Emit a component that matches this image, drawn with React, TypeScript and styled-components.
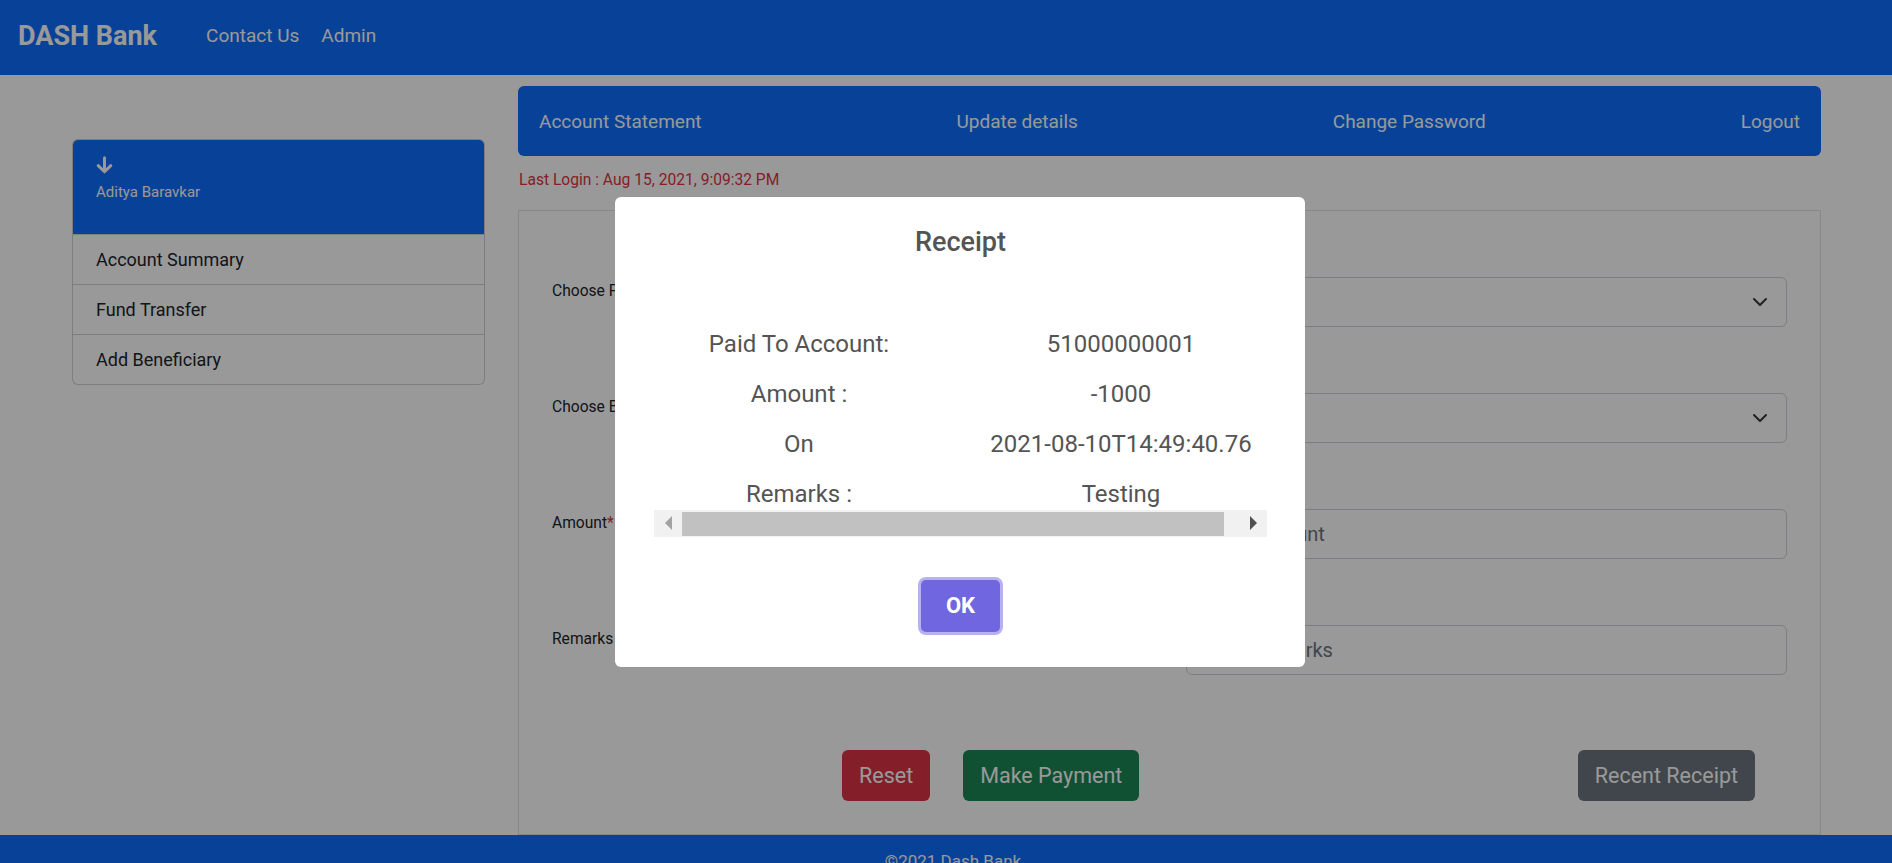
import React from "react";
import styled, { createGlobalStyle } from "styled-components";

const GlobalStyle = createGlobalStyle`
  html, body { margin: 0; padding: 0; }
  body {
    font-family: Roboto, "Liberation Sans", Arial, sans-serif;
    background: #fff;
    color: #212529;
  }
  * { box-sizing: border-box; }
`;

const blue = "#0d6efd";

const Page = styled.div`
  min-height: 863px;
  display: flex;
  flex-direction: column;
`;

const NavBar = styled.header`
  height: 75px;
  background: ${blue};
  display: flex;
  align-items: center;
  padding: 0 0 4px 18px;
`;

const Brand = styled.span`
  font-size: 27px;
  font-weight: 700;
  color: #fff;
  margin-right: 49px;
`;

const NavLink = styled.a`
  font-size: 19px;
  color: #fff;
  margin-right: 22px;
  text-decoration: none;
`;

const Main = styled.main`
  display: flex;
  align-items: flex-start;
  gap: 33px;
  padding: 11px 71px 0 72px;
`;

const Sidebar = styled.aside`
  width: 413px;
  flex-shrink: 0;
  margin-top: 53px;
  border: 1px solid rgba(0, 0, 0, 0.175);
  border-radius: 6px;
  overflow: hidden;
  background: #fff;
`;

const SideHeader = styled.div`
  height: 94px;
  background: ${blue};
  color: #fff;
  padding: 16px 23px 0;
`;

const UserName = styled.div`
  font-size: 15px;
  line-height: 20px;
  margin-top: 4px;
`;

const SideItem = styled.div`
  height: 50px;
  border-top: 1px solid rgba(0, 0, 0, 0.175);
  display: flex;
  align-items: center;
  padding-left: 23px;
  font-size: 18px;
  color: #212529;
  &:first-of-type { border-top: none; height: 49px; }
`;

const Content = styled.section`
  flex: 1;
  min-width: 0;
`;

const TopNav = styled.nav`
  height: 70px;
  background: ${blue};
  border-radius: 6px;
  display: flex;
  align-items: center;
  justify-content: space-between;
  padding: 0 21px;
  font-size: 19px;
  color: #fff;
`;

const LastLogin = styled.div`
  color: #dc3545;
  font-size: 15.6px;
  line-height: 24px;
  margin-top: 12px;
  padding-left: 1px;
`;

const FormCard = styled.div`
  margin-top: 18px;
  height: 625px;
  border: 1px solid #dee2e6;
  background: #fff;
  padding: 66px 33px 0;
`;

const FormBody = styled.div`
  display: flex;
  flex-direction: column;
  gap: 66px;
`;

const FormRow = styled.div`
  display: grid;
  grid-template-columns: 1fr 601px;
  height: 50px;
`;

const Label = styled.label`
  font-size: 15.6px;
  line-height: 24px;
  padding-top: 2px;
  color: #212529;
`;

const Required = styled.span`
  color: #dc3545;
`;

const SelectWrap = styled.div`
  position: relative;
  height: 50px;
`;

const Select = styled.select`
  appearance: none;
  width: 100%;
  height: 50px;
  border: 1px solid #ced4da;
  border-radius: 6px;
  background: #fff;
  font-family: inherit;
  font-size: 20px;
  padding: 0 16px;
  color: #212529;
`;

const Chevron = styled.svg`
  position: absolute;
  right: 19px;
  top: 17px;
  pointer-events: none;
`;

const Input = styled.input`
  width: 100%;
  height: 50px;
  border: 1px solid #ced4da;
  border-radius: 6px;
  background: #fff;
  font-family: inherit;
  font-size: 20px;
  padding: 0 16px;
  color: #212529;
  &::placeholder { color: #6c757d; }
`;

const ButtonRow = styled.div`
  display: flex;
  align-items: center;
  gap: 33px;
  margin-top: 75px;
  padding-left: 290px;
  padding-right: 32px;
`;

const Button = styled.button<{ $bg: string; $push?: boolean }>`
  height: 51px;
  padding: 0 17px;
  font-family: inherit;
  font-size: 21.5px;
  border: none;
  border-radius: 6px;
  color: #fff;
  background: ${(p) => p.$bg};
  margin-left: ${(p) => (p.$push ? "auto" : "0")};
`;

const Footer = styled.footer`
  margin-top: auto;
  background: ${blue};
  height: 60px;
  padding: 16px 0 0 14px;
  text-align: center;
  font-size: 17px;
  color: #fff;
`;

const Overlay = styled.div`
  position: fixed;
  inset: 0;
  background: rgba(0, 0, 0, 0.4);
  display: flex;
  align-items: center;
  justify-content: center;
  padding-left: 28px;
`;

const Modal = styled.div`
  width: 690px;
  height: 470px;
  background: #fff;
  border-radius: 6px;
  padding: 29px 38px 0 39px;
  display: flex;
  flex-direction: column;
  align-items: center;
`;

const Title = styled.h2`
  margin: 0;
  font-size: 27px;
  line-height: 32px;
  font-weight: 500;
  color: #545454;
`;

const ScrollArea = styled.div`
  width: 100%;
  height: 191px;
  margin-top: 61px;
  overflow: hidden;
`;

const Table = styled.table`
  width: 644px;
  border-collapse: collapse;
  table-layout: fixed;
`;

const Cell = styled.td<{ $w: number }>`
  width: ${(p) => p.$w}px;
  height: 50px;
  padding: 0;
  text-align: center;
  vertical-align: middle;
  font-size: 24px;
  color: #545454;
  white-space: nowrap;
`;

const ScrollBar = styled.div`
  width: 100%;
  height: 27px;
  background: #f1f1f1;
  display: flex;
  align-items: stretch;
`;

const ScrollButton = styled.div`
  width: 28px;
  display: flex;
  align-items: center;
  justify-content: center;
`;

const Arrow = styled.span<{ $dir: "left" | "right"; $color: string }>`
  width: 0;
  height: 0;
  border-top: 7px solid transparent;
  border-bottom: 7px solid transparent;
  ${(p) =>
    p.$dir === "left"
      ? `border-right: 7px solid ${p.$color};`
      : `border-left: 7px solid ${p.$color};`}
`;

const Thumb = styled.div`
  width: 542px;
  margin: 2px 0 1px;
  background: #c1c1c1;
`;

const TrackRest = styled.div`
  flex: 1;
`;

const OkButton = styled.button`
  margin-top: 43px;
  width: 79px;
  height: 52px;
  border: none;
  border-radius: 5px;
  background: #7066e0;
  color: #fff;
  font-family: inherit;
  font-size: 22px;
  font-weight: 700;
  box-shadow: 0 0 0 3px rgba(112, 102, 224, 0.5);
`;

const ArrowDownIcon = () => (
  <svg width="17" height="18" viewBox="0 0 17 18" fill="none">
    <path d="M8.5 1.8v13.7M2.2 9.6l6.3 6.2 6.3-6.2" stroke="#fff" strokeWidth="3" strokeLinecap="round" strokeLinejoin="round" />
  </svg>
);

const ChevronIcon = () => (
  <Chevron width="16" height="16" viewBox="0 0 16 16" fill="none">
    <path d="m2 5 6 6 6-6" stroke="#343a40" strokeWidth="2" strokeLinecap="round" strokeLinejoin="round" />
  </Chevron>
);

const receipt: [string, string][] = [
  ["Paid To Account:", "51000000001"],
  ["Amount :", "-1000"],
  ["On", "2021-08-10T14:49:40.76"],
  ["Remarks :", "Testing"],
];

export default function App() {
  return (
    <>
      <GlobalStyle />
      <Page>
        <NavBar>
          <Brand>DASH Bank</Brand>
          <NavLink>Contact Us</NavLink>
          <NavLink>Admin</NavLink>
        </NavBar>
        <Main>
          <Sidebar>
            <SideHeader>
              <ArrowDownIcon />
              <UserName>Aditya Baravkar</UserName>
            </SideHeader>
            <SideItem>Account Summary</SideItem>
            <SideItem>Fund Transfer</SideItem>
            <SideItem>Add Beneficiary</SideItem>
          </Sidebar>
          <Content>
            <TopNav>
              <span>Account Statement</span>
              <span>Update details</span>
              <span>Change Password</span>
              <span>Logout</span>
            </TopNav>
            <LastLogin>Last Login : Aug 15, 2021, 9:09:32 PM</LastLogin>
            <FormCard>
              <FormBody>
                <FormRow>
                  <Label>Choose From Account</Label>
                  <SelectWrap>
                    <Select defaultValue="">
                      <option value=""></option>
                    </Select>
                    <ChevronIcon />
                  </SelectWrap>
                </FormRow>
                <FormRow>
                  <Label>Choose Beneficiary</Label>
                  <SelectWrap>
                    <Select defaultValue="">
                      <option value=""></option>
                    </Select>
                    <ChevronIcon />
                  </SelectWrap>
                </FormRow>
                <FormRow>
                  <Label>
                    Amount<Required>*</Required>
                  </Label>
                  <Input placeholder="Enter Amount" />
                </FormRow>
                <FormRow>
                  <Label>Remarks</Label>
                  <Input placeholder="Enter Remarks" />
                </FormRow>
              </FormBody>
              <ButtonRow>
                <Button $bg="#dc3545">Reset</Button>
                <Button $bg="#198754">Make Payment</Button>
                <Button $bg="#6c757d" $push>
                  Recent Receipt
                </Button>
              </ButtonRow>
            </FormCard>
          </Content>
        </Main>
        <Footer>©2021 Dash Bank</Footer>
      </Page>
      <Overlay>
        <Modal>
          <Title>Receipt</Title>
          <ScrollArea>
            <Table>
              <tbody>
                {receipt.map(([k, v]) => (
                  <tr key={k}>
                    <Cell $w={290}>{k}</Cell>
                    <Cell $w={354}>{v}</Cell>
                  </tr>
                ))}
              </tbody>
            </Table>
          </ScrollArea>
          <ScrollBar>
            <ScrollButton>
              <Arrow $dir="left" $color="#a3a3a3" />
            </ScrollButton>
            <Thumb />
            <TrackRest />
            <ScrollButton>
              <Arrow $dir="right" $color="#505050" />
            </ScrollButton>
          </ScrollBar>
          <OkButton>OK</OkButton>
        </Modal>
      </Overlay>
    </>
  );
}
